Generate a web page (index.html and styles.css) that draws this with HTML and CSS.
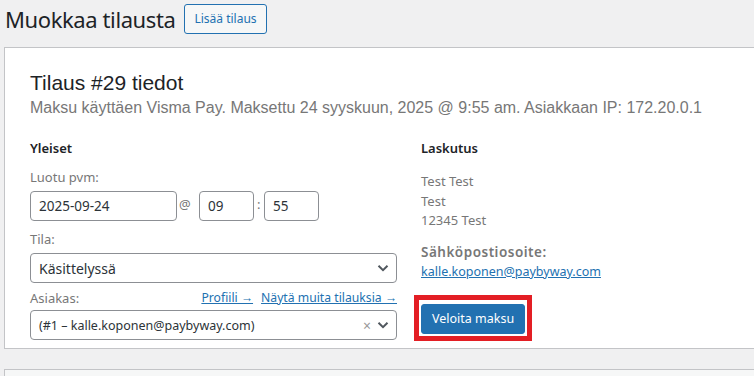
FILE: index.html
```html
<!DOCTYPE html>
<html lang="fi">
<head>
  <meta charset="UTF-8" />
  <meta name="viewport" content="width=device-width, initial-scale=1.0" />
  <title>Muokkaa tilausta</title>
  <link rel="stylesheet" href="styles.css">
</head>
<body>
  <div class="wrap">
    <header class="page-head">
      <h1>Muokkaa tilausta</h1>
      <a class="add-btn" href="#">Lisää tilaus</a>
    </header>

    <div class="panel">
      <h2>Tilaus #29 tiedot</h2>
      <p class="meta">Maksu käyttäen Visma Pay. Maksettu 24 syyskuun, 2025 @ 9:55 am. Asiakkaan IP: 172.20.0.1</p>

      <div class="columns">
        <div class="col">
          <h3>Yleiset</h3>
          <label class="field-label">Luotu pvm:</label>
          <div class="date-row">
            <input class="input date" type="text" value="2025-09-24">
            <span class="sep">@</span>
            <input class="input time" type="text" value="09">
            <span class="sep colon">:</span>
            <input class="input time" type="text" value="55">
          </div>

          <label class="field-label">Tila:</label>
          <div class="select">
            <span class="value">Käsittelyssä</span>
            <svg class="chev" width="12" height="8" viewBox="0 0 12 8"><path d="M1.5 1.8 6 6.2l4.5-4.4" fill="none" stroke="#50575e" stroke-width="2"/></svg>
          </div>

          <div class="label-row">
            <label class="field-label">Asiakas:</label>
            <span class="links"><a href="#">Profiili →</a><a href="#">Näytä muita tilauksia →</a></span>
          </div>
          <div class="select customer">
            <span class="value">(#1 – kalle.koponen@paybyway.com)</span>
            <span class="clear">×</span>
            <svg class="chev" width="12" height="8" viewBox="0 0 12 8"><path d="M1.5 1.8 6 6.2l4.5-4.4" fill="none" stroke="#50575e" stroke-width="2"/></svg>
          </div>
        </div>

        <div class="col">
          <h3>Laskutus</h3>
          <p class="address">Test Test<br>Test<br>12345 Test</p>
          <p class="email-label">Sähköpostiosoite:</p>
          <p><a class="email" href="#">kalle.koponen@paybyway.com</a></p>
          <div class="charge">
            <button class="charge-btn">Veloita maksu</button>
          </div>
        </div>
      </div>
    </div>

    <div class="panel next"></div>
  </div>
</body>
</html>
```

FILE: styles.css
```css
* {
  margin: 0;
  padding: 0;
  box-sizing: border-box;
}
body {
  background-color: #f0f0f1;
  font-family: 'Noto Sans', 'Open Sans', sans-serif;
  font-size: 13px;
  color: #3c434a;
  overflow: hidden;
}
.wrap {
  padding-left: 4px;
  width: 800px;
}
.page-head {
  display: flex;
  align-items: center;
  height: 47px;
  padding-bottom: 9px;
}
.page-head h1 {
  font-size: 22px;
  font-weight: 400;
  color: #1d2327;
  margin-left: 1px;
  margin-right: 9px;
  letter-spacing: -0.4px;
}
.add-btn {
  display: inline-block;
  height: 30px;
  line-height: 28px;
  padding: 0 9px;
  border: 1px solid #2271b1;
  border-radius: 3px;
  background-color: #f6f7f7;
  color: #2271b1;
  font-size: 12px;
  text-decoration: none;
}
.panel {
  background-color: #fff;
  border: 1px solid #c3c4c7;
  padding: 21px 25px 8px;
  height: 302px;
}
.panel h2 {
  font-family: 'Liberation Sans', Arial, sans-serif;
  font-size: 21px;
  font-weight: 400;
  color: #1d2327;
  line-height: 28px;
}
.meta {
  font-family: 'Liberation Sans', Arial, sans-serif;
  font-size: 16px;
  color: #777;
  line-height: 22px;
}
.columns {
  display: grid;
  grid-template-columns: 367px 367px;
  column-gap: 24px;
  margin-top: 19px;
}
.col h3 {
  font-size: 13px;
  font-weight: 600;
  color: #1d2327;
  line-height: 20px;
  margin-bottom: 9px;
}
.field-label {
  display: block;
  color: #777;
  line-height: 20px;
  margin-bottom: 4px;
}
.date-row {
  display: flex;
  align-items: flex-start;
  margin-bottom: 8px;
}
.input {
  height: 30px;
  border: 1px solid #8c8f94;
  border-radius: 4px;
  padding: 0 8px;
  font-family: inherit;
  font-size: 13.5px;
  color: #2c3338;
  background-color: #fff;
}
.date {
  width: 147px;
}
.time {
  width: 55px;
}
.sep {
  color: #777;
  font-size: 13px;
  line-height: 26px;
  width: 22px;
  padding-left: 2px;
}
.sep.colon {
  width: 10px;
  padding-left: 3px;
}
.select {
  display: flex;
  align-items: center;
  height: 30px;
  border: 1px solid #8c8f94;
  border-radius: 4px;
  padding: 0 6px 0 8px;
  font-size: 14px;
  color: #2c3338;
  margin-bottom: 5px;
}
.select .value {
  flex: 1;
}
.customer .value {
  font-size: 12.5px;
}
.clear {
  color: #999;
  font-size: 14px;
  margin-right: 6px;
}
.chev {
  margin-right: 1px;
}
.label-row {
  display: flex;
  justify-content: space-between;
  align-items: flex-end;
  margin-bottom: 2px;
}
.label-row .field-label {
  margin-bottom: 0;
}
.links {
  line-height: 20px;
  font-size: 12.2px;
}
.links a {
  color: #2271b1;
  margin-left: 8px;
}
.address {
  color: #777;
  line-height: 19.5px;
  margin-top: 14px;
  margin-bottom: 11px;
}
.email-label {
  font-size: 13.5px;
  font-weight: 600;
  color: #777;
  line-height: 20px;
  letter-spacing: 0.5px;
}
.email {
  color: #2271b1;
  font-size: 12.5px;
  line-height: 20px;
}
.charge {
  display: inline-block;
  border: 5px solid #e31e24;
  padding: 4px 2px 2px;
  margin-top: 13px;
  margin-left: -7px;
}
.charge-btn {
  display: block;
  height: 30px;
  padding: 0 10px;
  background-color: #2271b1;
  border: 1px solid #2271b1;
  border-radius: 3px;
  color: #fff;
  font-family: inherit;
  font-size: 12.5px;
}
.panel.next {
  margin-top: 20px;
  height: 40px;
  background-color: #f6f7f7;
}
```
